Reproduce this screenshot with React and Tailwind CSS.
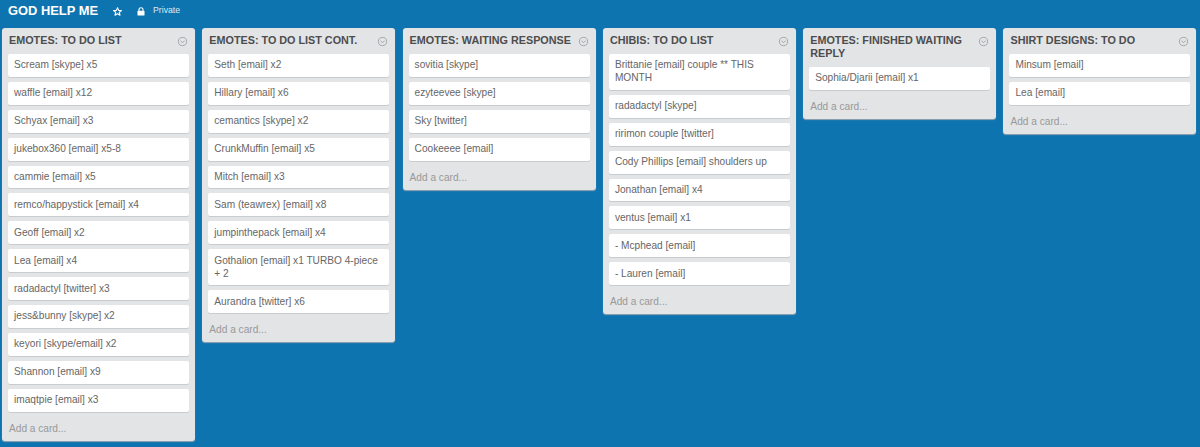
import React from 'react';

const lists = [
    {
        title: 'EMOTES: TO DO LIST',
        cards: ['Scream [skype] x5', 'waffle [email] x12', 'Schyax [email] x3', 'jukebox360 [email] x5-8', 'cammie [email] x5', 'remco/happystick [email] x4', 'Geoff [email] x2', 'Lea [email] x4', 'radadactyl [twitter] x3', 'jess&bunny [skype] x2', 'keyori [skype/email] x2', 'Shannon [email] x9', 'imaqtpie [email] x3'],
    },
    {
        title: 'EMOTES: TO DO LIST CONT.',
        cards: ['Seth [email] x2', 'Hillary [email] x6', 'cemantics [skype] x2', 'CrunkMuffin [email] x5', 'Mitch [email] x3', 'Sam (teawrex) [email] x8', 'jumpinthepack [email] x4', 'Gothalion [email] x1 TURBO 4-piece + 2', 'Aurandra [twitter] x6'],
    },
    {
        title: 'EMOTES: WAITING RESPONSE',
        cards: ['sovitia [skype]', 'ezyteevee [skype]', 'Sky [twitter]', 'Cookeeee [email]'],
    },
    {
        title: 'CHIBIS: TO DO LIST',
        cards: ['Brittanie [email] couple ** THIS MONTH', 'radadactyl [skype]', 'ririmon couple [twitter]', 'Cody Phillips [email] shoulders up', 'Jonathan [email] x4', 'ventus [email] x1', '- Mcphead [email]', '- Lauren [email]'],
    },
    {
        title: 'EMOTES: FINISHED WAITING REPLY',
        cards: ['Sophia/Djarii [email] x1'],
    },
    {
        title: 'SHIRT DESIGNS: TO DO',
        cards: ['Minsum [email]', 'Lea [email]'],
    },
];

function MenuIcon() {
    return (
        <svg width="11" height="11" viewBox="0 0 11 11" fill="none" stroke="#a5a8ab" strokeWidth="1" className="shrink-0 mt-[3px]">
            <circle cx="5.5" cy="5.5" r="4.1" />
            <path d="M3.4 4.7 L5.5 6.8 L7.6 4.7" />
        </svg>
    );
}

function List({ title, cards }) {
    return (
        <div className="w-[193px] shrink-0 bg-[#e2e4e6] rounded-[3px] shadow-[0_1px_1px_#94a3b0] px-[6px] pt-[5px]">
            <div className="flex justify-between gap-[4px] pl-[1px] pr-[1px] pb-[4px]">
                <h2 className="text-[10.8px] leading-[13px] font-bold text-[#4d4d4d] pt-[1px]">{title}</h2>
                <MenuIcon />
            </div>
            <div className="flex flex-col gap-[5px] mt-[3px]">
                {cards.map((card) => (
                    <div key={card} className="bg-white rounded-[2px] shadow-[0_1px_0_#c9cccf] px-[6px] pt-[4.4px] pb-[5.5px] text-[10.15px] leading-[13px] text-[#666666]">
                        {card}
                    </div>
                ))}
            </div>
            <div className="text-[10.15px] leading-[15px] text-[#999999] pl-[1px] pt-[9px] pb-[5px]">Add a card...</div>
        </div>
    );
}

export default function App() {
    return (
        <div className="w-[1200px] h-[447px] overflow-hidden bg-[#0e74af] font-['Liberation_Sans',Arial,sans-serif]">
            <header className="h-[28px] flex items-center pl-[8px] pb-[6px]">
                <h1 className="text-[12.9px] leading-[20px] font-bold text-white">GOD HELP ME</h1>
                <svg width="9" height="9" viewBox="0 0 24 24" fill="none" stroke="white" strokeWidth="3" strokeLinejoin="round" className="ml-[15px]">
                    <path d="M12 2l3 7 7.5.6-5.7 4.9 1.8 7.5L12 18l-6.6 4 1.8-7.5L1.5 9.6 9 9z" />
                </svg>
                <svg width="8" height="9" viewBox="0 0 8 9" className="ml-[15px]">
                    <path d="M2 4V2.8a2 2 0 0 1 4 0V4" fill="none" stroke="white" strokeWidth="1.1" />
                    <rect x="0.5" y="3.8" width="7" height="4.7" rx="0.6" fill="white" />
                </svg>
                <span className="text-[8.7px] text-[#dfeaf3] ml-[8px]">Private</span>
            </header>
            <main className="flex items-start gap-[7.3px] pl-[2px]">
                {lists.map((list) => (
                    <List key={list.title} title={list.title} cards={list.cards} />
                ))}
            </main>
        </div>
    );
}
